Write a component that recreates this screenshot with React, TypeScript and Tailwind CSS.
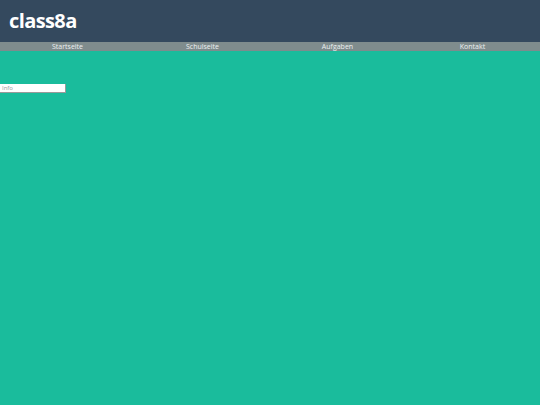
export default function App() {
  const links = ['Startseite', 'Schulseite', 'Aufgaben', 'Kontakt']

  return (
    <div className="min-h-screen w-full bg-[#1abc9c] font-['Open_Sans',sans-serif]">
      <header className="h-[42px] bg-[#34495e] flex items-center px-[9px]">
        <h1 className="text-[20px] font-bold text-white leading-none tracking-[-0.6px]">class8a</h1>
      </header>
      <nav className="grid grid-cols-4 h-[9px] bg-[#7f8c8d]">
        {links.map((l) => (
          <a key={l} href="#" className="text-center text-[7px] leading-[9px] text-[#ecf0f1]">
            {l}
          </a>
        ))}
      </nav>
      <div className="pt-[33px]">
        <input
          type="text"
          placeholder="Info"
          className="block w-[66px] h-[9px] bg-white border-0 border-r border-b border-[#9a9a9a] px-[2px] text-[6px] leading-[9px] placeholder-[#9a9a9a] outline-none"
        />
      </div>
    </div>
  )
}
